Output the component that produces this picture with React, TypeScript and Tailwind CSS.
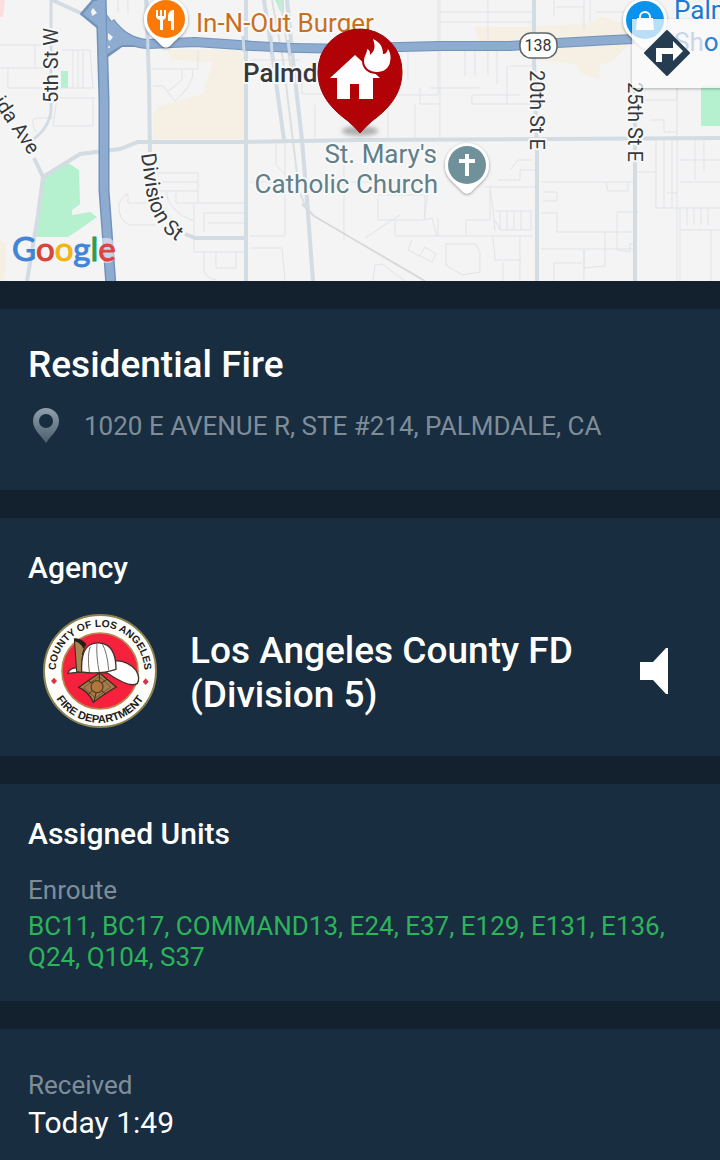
import React from 'react';

const units = ['BC11', 'BC17', 'COMMAND13', 'E24', 'E37', 'E129', 'E131', 'E136', 'Q24', 'Q104', 'S37'];

const IncidentMap: React.FC = () => (
  <svg
    className="block h-[281px] w-full"
    viewBox="0 0 720 281"
    preserveAspectRatio="xMaxYMid slice"
    fontFamily="Roboto, sans-serif"
    role="img"
    aria-label="Incident map"
  >
    <defs>
      <path id="division-st" d="M141 154 L146 190 Q150 216 166 233 Q175 241 200 256" />
      <path id="rancho-vista" d="M-7 102 L51 187" />
      <filter id="map-blur" x="-30%" y="-50%" width="160%" height="200%">
        <feGaussianBlur stdDeviation="2" />
      </filter>
      <filter id="pin-shadow" x="-30%" y="-30%" width="160%" height="160%">
        <feDropShadow dx="0" dy="1" stdDeviation="1.5" floodColor="#000" floodOpacity="0.4" />
      </filter>
    </defs>
    <rect width="720" height="281" fill="#f4f4f4" />

    {/* Commercial areas and parks */}
    <g fill="#f6efe3">
      <path d="M168 50 H245 V139 H153 V114 L160 106 L203 94 L213 62 L172 60 Z" />
      <path d="M0 240 L6 243 L5 281 H0 Z" />
      <path d="M474 27 H533 L590 23 L602 16 L632 28 V40 L480 42 Z" />
      <path d="M535 48 L630 44 L612 62 L600 64 L599 80 L580 72 L576 64 L535 60 Z" />
    </g>
    <path d="M0 0 H5 L3 17 H0 Z" fill="#fbdedd" />
    <g fill="#b5f0cf">
      <path d="M45 174 L68 163 L79 170 L80 204 L72 210 L72 215 L90 212 L97 217 L80 229 L68 237 L36 237 Z" />
      <rect x="61" y="71" width="7" height="17" />
      <path d="M275 0 H284 V13 L280 11 Z" />
      <rect x="701" y="86" width="19" height="40" />
    </g>

    {/* Side streets */}
    <g fill="none" stroke="#e0e3e8" strokeWidth="1">
      <path d="M0 45 H52 M0 68 H60 M8 68 V88 H94 M35 45 V68 M62 50 H90 L93 88 M73 50 V88 M78 50 V88 M83 50 V88 M60 98 H95 M93 98 V126 H53 M53 126 L57 98 M53 118 H35 Q30 122 36 132" />
      <path d="M118 0 V12 M128 0 V14 M198 50 V69 H152 M182 70 V80 L167 92 M193 70 Q194 85 175 101 L163 86 H153" />
      <path d="M155 173 H198 V203 M157 182 H198 M155 191 H198 M166 191 Q168 212 194 221 M176 191 V203 H245 M194 203 V252 H245 M204 213 H245 M204 213 V232 M208 223 H245 M119 204 Q122 196 128 194 V203 H148 M119 204 Q118 220 129 225 H156 M204 252 V270 Q206 278 216 280 M216 252 V268 H236 V252" />
      <path d="M250 60 H300 M302 70 V94 H330 M330 62 V100 M315 105 V140 M344 145 V240 M285 140 V236 H250 M276 140 V165 L286 175 M250 248 H282 L285 281 M250 182 H345 M344 182 H430" />
      <path d="M388 104 V140 M397 95 H438 V0 M408 50 V80 M415 104 V140 M430 88 H480 M420 88 V104 H440 M472 95 H520 M472 95 V104 H530 M440 0 V140 M488 0 V76 M440 12 H533 M440 22 H533 M465 50 V76 M475 50 V76 M497 50 V84 M507 66 V104 M510 66 H533" />
      <path d="M378 195 H425 V220 H378 V198 M395 220 V236 H480 M425 220 L432 218 L437 236 M430 180 L424 218 M438 218 V236 M466 236 V220 H490 V190 M412 240 L408 250 L432 262 L436 254 L425 247 L420 256 M446 244 H476 L480 252 V272 L462 275 L446 265 Z M373 281 L375 265 L382 264 L405 281 M365 238 L400 215" />
      <path d="M554 0 V16 M556 7 H584 V30 M584 7 V0 M590 0 V22 M596 12 H630" />
      <path d="M484 187 H535 M490 187 L493 210 L495 231 M495 211 H531 V230 H500 L495 220 M500 211 V230 M507 211 V230 M514 211 V230 M521 211 V230 M480 236 H533 M493 236 L495 260 H520 V281 M503 262 V281 M520 236 V262 M510 170 L518 160 H533 M498 180 H520 V170 H535" />
      <path d="M541 182 H633 M543 192 H557 V201 H543 M541 213 H557 V232 H633 M606 182 L608 191 H628 V183 M638 212 H617 V250 L630 252 V244 H637 M605 232 V266 L584 268 V250 M554 281 V263 H582 M541 249 H633 M584 250 V281" />
      <path d="M638 100 H677 V88 M650 120 H664 V132 H678 M677 88 V281 M638 172 H656 M656 140 V208 H720 M664 140 V208 M672 140 V208 M680 160 H720 M695 140 V180 M704 140 V172 M680 182 H720 M680 208 V281 M687 208 V225 M694 208 V225 M701 208 V225 M708 208 V225 M680 230 H720 M711 230 V281 M667 193 H677" />
    </g>
    <path d="M302 204 L314 216 L360 243 L425 281" fill="none" stroke="#d9d9db" strokeWidth="2" />
    <path d="M272 0 L283 60 L299 190 L306 208 M280 0 L291 70" fill="none" stroke="#dcdfe0" strokeWidth="2" />

    {/* Main roads */}
    <g fill="none" stroke="#d3dce3" strokeWidth="4">
      <path d="M51 0 V110 Q50 128 30 142" strokeWidth="3" />
      <path d="M34 158 L43 177 L38 215 L27 281" />
      <path d="M43 177 L80 154 L120 149 L138 142 H240 L360 140 L720 138" />
      <path d="M52 0 L85 15" />
      <path d="M146 0 L149 80 L150 152" />
      <path d="M185 234 L195 238 H245" />
      <path d="M246 0 V281" />
      <path d="M264 0 L273 60 L284 140 M287 0 L294 70 L302 140 L307 200 L313 281" />
      <path d="M534 0 V60 L537 150 V281" />
      <path d="M635 88 V281" />
    </g>

    {/* Highways */}
    <g fill="none" strokeLinejoin="round">
      <g stroke="#7393bb" strokeWidth="10">
        <path d="M110 22 Q125 43 148 44 L195 42 L240 45 Q300 50 360 48 L440 46 H510 Q570 42 634 39" />
        <path d="M101 -5 L104 100 V190 L111 286" strokeWidth="11" />
        <path d="M107 16 Q118 34 136 38 L136 46 H122 L108 56 Z M81 14 L93 0 H98 V28 Z" fill="#7393bb" strokeWidth="2" />
      </g>
      <g stroke="#8eabd0">
        <path d="M110 22 Q125 43 148 44 L195 42 L240 45 Q300 50 360 48 L440 46 H510 Q570 42 634 39" strokeWidth="8" />
        <path d="M101 -5 L104 100 V190 L111 286" strokeWidth="8" />
        <path d="M107 16 Q118 34 136 39 L136 45 H122 L107 54 Z M83 14 L94 1 H98 V26 Z" fill="#8eabd0" stroke="none" />
      </g>
    </g>
    <g fill="#f4f4f4">
      <path d="M91 11 L93 8 L97 13 L92 16 Z" />
      <path d="M108 33 L113 37 L110 41 L108 39 Z" />
      <circle cx="109" cy="47" r="1" />
    </g>
    <path d="M147 0 L148 52 M243 36 L244 52 M271 36 L272 54 M288 40 L290 56" fill="none" stroke="#c9d8e8" strokeWidth="3" />

    {/* Street names */}
    <g fill="#36383c" stroke="#f8f8f8" strokeWidth="4" strokeLinejoin="round" paintOrder="stroke" fontSize="20">
      <text transform="translate(58 103) rotate(-90)">5th St W</text>
      <text transform="translate(530 70) rotate(90)">20th St E</text>
      <text transform="translate(628 82) rotate(90)">25th St E</text>
      <text fontSize="21"><textPath href="#division-st">Division St</textPath></text>
      <text><textPath href="#rancho-vista">ida Ave</textPath></text>
      <text x="243" y="82" fontSize="26" fontWeight="500">Palmdale</text>
    </g>
    <g stroke="#f8f8f8" strokeWidth="4" strokeLinejoin="round" paintOrder="stroke" fontSize="26">
      <text x="196" y="32" fill="#c8701e">In-N-Out Burger</text>
      <g fill="#607f88" textAnchor="end">
        <text x="437" y="163">St. Mary's</text>
        <text x="438" y="193">Catholic Church</text>
      </g>
      <text x="674" y="19" fill="#2079d0">Palmdale</text>
    </g>

    {/* Route shield */}
    <rect x="520" y="33" width="37" height="25" rx="11" fill="#fff" stroke="#626669" strokeWidth="1.5" />
    <text x="538" y="51" fontSize="16" fill="#333" textAnchor="middle">138</text>

    {/* Restaurant */}
    <g filter="url(#pin-shadow)">
      <path d="M166 -3 A22 22 0 0 1 188 19 C188 32 179 36 171 45 Q166 50 161 45 C153 36 144 32 144 19 A22 22 0 0 1 166 -3 Z" fill="#fff" />
    </g>
    <circle cx="166" cy="19" r="19" fill="#fb7a07" />
    <path d="M156 10 H158 V16 H160 V10 H162 V16 H164 V10 H166 V16 Q166 19 163 20 V30 H160 V20 Q156 19 156 16 Z" fill="#fff" />
    <path d="M174 10 V30 H171 V21 H168 V15 Q169 10 174 10 Z" fill="#fff" />

    {/* Church */}
    <g filter="url(#pin-shadow)">
      <path d="M467 143 A22 22 0 0 1 489 165 C489 178 480 182 472 191 Q467 196 462 191 C454 182 445 178 445 165 A22 22 0 0 1 467 143 Z" fill="#fff" />
    </g>
    <circle cx="467" cy="165" r="19" fill="#70909a" />
    <path d="M467 154 V176 M459 161 H475" stroke="#fff" strokeWidth="4" />

    {/* Mall */}
    <g filter="url(#pin-shadow)">
      <path d="M645 -2 A22 22 0 0 1 667 20 C667 33 658 37 650 46 Q645 51 640 46 C632 37 623 33 623 20 A22 22 0 0 1 645 -2 Z" fill="#fff" />
    </g>
    <circle cx="645" cy="20" r="19" fill="#0a93ee" />
    <path d="M637 18 H653 L654 30 H636 Z" fill="#fff" />
    <path d="M640 20 V17 A5 5 0 0 1 650 17 V20" fill="none" stroke="#fff" strokeWidth="2" />

    {/* Directions backdrop, with the mall label showing through */}
    <g filter="url(#pin-shadow)" opacity="0.72">
      <rect x="632" y="19" width="100" height="69" fill="#fcfcfc" />
    </g>
    <text x="674" y="51" fontSize="26" fill="#c9d6ea">
      Sh<tspan fill="#2b80d2">ops</tspan>
    </text>

    {/* Incident */}
    <ellipse cx="360" cy="131" rx="18" ry="5" fill="#777" opacity="0.55" filter="url(#map-blur)" />
    <path d="M360 29 A42 42 0 0 1 402 72 C402 95 387 110 372 121 Q365 127 360 133 Q355 127 348 121 C333 110 318 95 318 72 A42 42 0 0 1 360 29 Z" fill="#b00207" stroke="#99060b" strokeWidth="1" />
    <path d="M355 55 L380 78 H373 V99 H359 V84 H350 V99 H337 V78 H330 Z" fill="#fff" />
    <path
      d="M373 39 C380 42 383 47 383 54 C386 54 387 52 388 49 C391 54 391 58 390 62 C389 68 384 72 377 72 C370 72 364 68 364 61 C364 56 367 54 367 49 C370 50 370 52 370 55 C376 50 375 45 373 39 Z"
      fill="#fff"
      stroke="#b00207"
      strokeWidth="4"
      paintOrder="stroke"
    />

    <g fontFamily="Lato, sans-serif" fontSize="33">
      <rect x="96" y="238" width="18" height="25" rx="6" fill="#fff" opacity="0.5" />
      <text x="12" y="261">
        <tspan fill="#4285d8" stroke="#4285d8">G</tspan>
        <tspan fill="#d8443c" stroke="#d8443c">o</tspan>
        <tspan fill="#efb511" stroke="#efb511">o</tspan>
        <tspan fill="#4285d8" stroke="#4285d8">g</tspan>
        <tspan fill="#2f9a50" stroke="#2f9a50">l</tspan>
        <tspan fill="#dc4443" stroke="#dc4443">e</tspan>
      </text>
    </g>
  </svg>
);

const DepartmentSeal: React.FC = () => (
  <svg className="size-[116px] shrink-0" viewBox="66 41 348 348" role="img" aria-label="County of Los Angeles Fire Department">
    <defs>
      <path id="seal-top" d="M113 255 A133 133 0 1 1 367 255" />
      <path id="seal-bottom" d="M88 185 A155 155 0 1 0 392 185" />
    </defs>
    <circle cx="240" cy="215" r="168" fill="#fffefa" stroke="#8d8355" strokeWidth="6" />
    <circle cx="240" cy="215" r="114" fill="#f5213d" stroke="#b5884f" strokeWidth="5" />
    <g fill="#1c1c22" fontFamily="'Liberation Sans', sans-serif" fontSize="31" fontWeight="700" textAnchor="middle">
      <text><textPath href="#seal-top" startOffset="50%">COUNTY OF LOS ANGELES</textPath></text>
      <text fontSize="33"><textPath href="#seal-bottom" startOffset="50%">FIRE DEPARTMENT</textPath></text>
    </g>
    <path d="M102 235 L111 245 L102 255 L93 245 Z M377 237 L386 247 L377 257 L368 247 Z" fill="#d83249" />
    {/* Helmet */}
    <path d="M144 222 Q148 206 172 205 L288 184 Q326 186 348 213 Q362 236 352 252 Q338 262 308 248 Q282 236 262 221 Q205 214 144 222 Z" fill="#fff" stroke="#41322a" strokeWidth="4" />
    <path d="M163 118 Q184 118 198 134 L188 160 L184 219 L170 217 Z" fill="#a78552" stroke="#30261e" strokeWidth="3" />
    <path d="M163 118 Q184 118 198 134 L190 148 Q180 128 163 126 Z" fill="#241e1b" />
    <path d="M185 218 Q182 154 209 137 Q235 124 262 138 Q288 156 288 210 Q240 226 185 218 Z" fill="#fff" stroke="#41322a" strokeWidth="4" />
    <path d="M211 142 Q201 165 208 218 M231 132 Q228 170 238 220 M247 134 Q262 160 266 212" fill="none" stroke="#76706c" strokeWidth="3" />
    {/* Badge */}
    <path d="M239 221 L289 263 Q262 277 220 309 Q205 275 176 264 Q200 247 239 221 Z" fill="#a57d4b" stroke="#3b2b1f" strokeWidth="4" />
    <path d="M238 231 L272 263 L227 296 L191 265 Z" fill="none" stroke="#5d4127" strokeWidth="2" />
    <path d="M238 224 V247 M229 278 L222 306 M216 252 L203 243 M246 250 L261 240 M217 273 L204 286 M245 274 L257 285" stroke="#3b2b1f" strokeWidth="3" />
    <circle cx="231" cy="262" r="18" fill="#b1763d" stroke="#5d4127" strokeWidth="4" />
  </svg>
);

const App: React.FC = () => {
  return (
    <main className="flex min-h-screen flex-col gap-7 bg-[#12212d] font-[Roboto,sans-serif] text-white">
      <div className="relative overflow-hidden">
        <IncidentMap />
        <button
          type="button"
          aria-label="Directions"
          className="absolute top-0 right-0 flex h-[88px] w-[88px] items-center justify-center pt-[18px] pr-[19px]"
        >
          <svg className="size-[48px]" viewBox="0 0 48 48">
            <path d="M24 2 L46 24 L24 46 L2 24 Z" fill="#263c50" stroke="#263c50" strokeWidth="2" strokeLinejoin="round" />
            <path d="M13 33 V19 H30 V12 L40 22 L30 32 V25 H19 V33 Z" fill="#fff" />
          </svg>
        </button>
      </div>

      {/* Incident */}
      <section className="bg-[#182d40] px-7 pt-8 pb-[42px]">
        <h1 className="text-[37px] leading-[48px] font-medium">Residential Fire</h1>
        <div className="mt-[15px] flex items-center gap-5 text-[#7f8d99]">
          <svg className="h-9 w-9 shrink-0" viewBox="0 0 36 36">
            <defs>
              <linearGradient id="place" x1="0" y1="0" x2="0" y2="1">
                <stop offset="0" stopColor="#91a0ac" />
                <stop offset="1" stopColor="#4a5f70" />
              </linearGradient>
            </defs>
            <path d="M18 0 A13 13 0 0 1 31 13 C31 22 23 27 18 35 C13 27 5 22 5 13 A13 13 0 0 1 18 0 Z" fill="url(#place)" />
            <circle cx="18" cy="13" r="7" fill="#182d40" />
          </svg>
          <p className="text-[26px] leading-[44px]">1020 E AVENUE R, STE #214, PALMDALE, CA</p>
        </div>
      </section>

      {/* Agency */}
      <section className="bg-[#182d40] px-7 pt-8 pb-[27px]">
        <h2 className="text-[30px] leading-[36px] font-medium">Agency</h2>
        <div className="mt-[27px] flex items-center pl-[14px]">
          <DepartmentSeal />
          <p className="ml-8 flex-1 pt-1 text-[37px] leading-[44px] font-medium">
            Los Angeles County FD
            <br />
            (Division 5)
          </p>
          <button type="button" aria-label="Listen" className="mr-6 shrink-0">
            <svg className="h-12 w-7" viewBox="0 0 28 48">
              <path d="M0 15 H13 L26 1 H28 V47 H26 L13 33 H0 Z" fill="#fff" />
            </svg>
          </button>
        </div>
      </section>

      {/* Units */}
      <section className="bg-[#182d40] px-7 pt-8 pb-7">
        <h2 className="text-[30px] leading-[36px] font-medium">Assigned Units</h2>
        <h3 className="mt-[22px] text-[26px] leading-[32px] text-[#7f8d99]">Enroute</h3>
        <p className="mt-[5px] text-[26px] leading-[31px] text-[#2db35a]">{units.join(', ')}</p>
      </section>

      {/* Times */}
      <section className="flex-1 bg-[#182d40] px-7 pt-10 pb-5">
        <h3 className="text-[26px] leading-[32px] text-[#7f8d99]">Received</h3>
        <p className="mt-1 text-[30px] leading-[36px]">Today 1:49</p>
      </section>
    </main>
  );
};

export default App;
